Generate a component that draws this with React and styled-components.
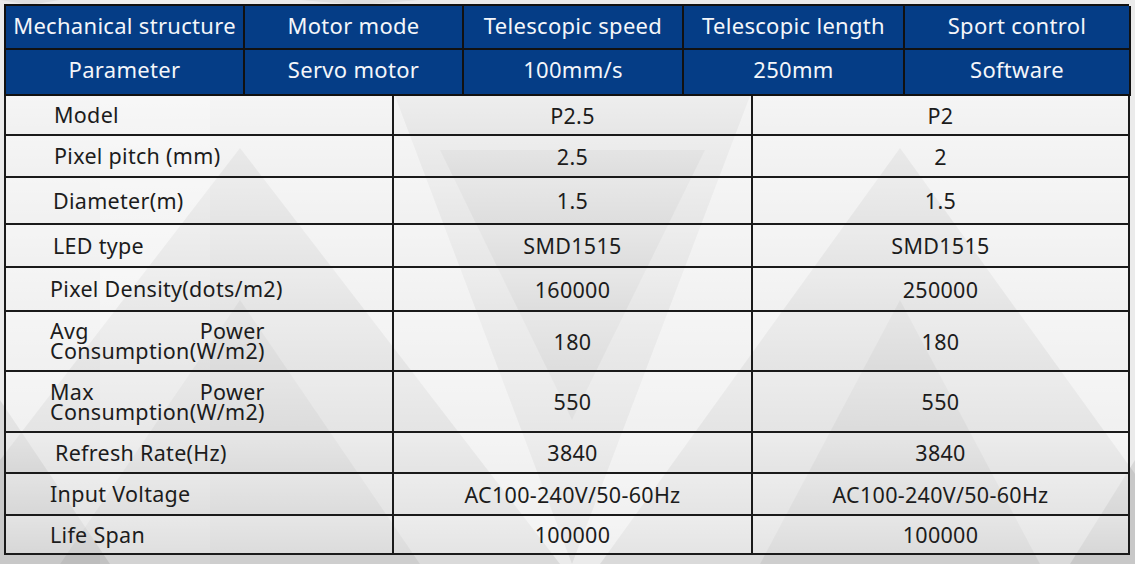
import React from 'react';
import styled, { createGlobalStyle } from 'styled-components';

const GlobalStyle = createGlobalStyle`
  html, body {
    margin: 0;
    padding: 0;
  }
  body {
    font-family: "Noto Sans", "Open Sans", Arial, sans-serif;
    background: #e7e7e7;
  }
`;

// soft grey triangles sitting behind the table, like the printed sheet
const triangles = `
<svg xmlns="http://www.w3.org/2000/svg" width="1135" height="564" viewBox="0 0 1135 564">
  <rect width="1135" height="564" fill="#ebebeb"/>
  <rect x="100" y="0" width="110" height="564" fill="#ffffff" opacity="0.25"/>
  <polygon points="240,148 -80,564 560,564" fill="#000" opacity="0.07"/>
  <polygon points="240,300 60,564 420,564" fill="#000" opacity="0.05"/>
  <polygon points="0,400 110,564 0,564" fill="#000" opacity="0.08"/>
  <polygon points="395,96 750,96 572,564" fill="#000" opacity="0.06"/>
  <polygon points="440,150 705,150 572,420" fill="#000" opacity="0.05"/>
  <polygon points="900,148 600,564 1200,564" fill="#000" opacity="0.07"/>
  <polygon points="900,300 760,564 1040,564" fill="#000" opacity="0.05"/>
  <polygon points="1135,460 1070,564 1135,564" fill="#000" opacity="0.08"/>
  <polygon points="0,0 60,0 30,5" fill="#000" opacity="0.05"/>
  <polygon points="300,0 420,0 360,5" fill="#000" opacity="0.05"/>
</svg>`;

const Page = styled.div`
  width: 1135px;
  height: 564px;
  box-sizing: border-box;
  padding: 4px 6px 0 4px;
  background: url("data:image/svg+xml,${encodeURIComponent(triangles)}") no-repeat;
  background-size: 1135px 564px;
`;

const HeadGrid = styled.div`
  display: grid;
  grid-template-columns: 239px 219px 220px 221px 226px;
  grid-template-rows: 44px 46px;
  border-top: 2px solid #111;
  border-left: 2px solid #111;
  box-sizing: border-box;
`;

const HeadCell = styled.div`
  background: #053d86;
  color: #f4f6fa;
  font-size: 22px;
  letter-spacing: 0.3px;
  display: flex;
  align-items: center;
  justify-content: center;
  padding-bottom: ${(p) => (p.$row === 0 ? 4 : 7)}px;
  border-right: 2px solid #111;
  border-bottom: 2px solid #111;
  white-space: nowrap;
`;

const SpecGrid = styled.div`
  display: grid;
  grid-template-columns: 388px 359px 377px;
  border-left: 2px solid #1a1a1a;
  box-sizing: border-box;
`;

const SpecCell = styled.div`
  height: ${(p) => p.$h}px;
  box-sizing: border-box;
  border-right: 2px solid #1a1a1a;
  border-bottom: 2px solid #1a1a1a;
  background: linear-gradient(rgba(255, 255, 255, 0.5), rgba(255, 255, 255, 0.28));
  color: #1c1c1c;
  font-size: 21.5px;
  letter-spacing: 0.3px;
  display: flex;
  align-items: center;
  justify-content: ${(p) => (p.$label ? 'flex-start' : 'center')};
  padding-left: ${(p) => (p.$label ? `${p.$indent}px` : '0')};
`;

const Label = styled.span`
  white-space: ${(p) => (p.$wrap ? 'normal' : 'nowrap')};
  width: ${(p) => (p.$wrap ? 'min-content' : 'auto')};
  text-align: justify;
  text-align-last: left;
  line-height: 20px;
`;

const header = [
  ['Mechanical structure', 'Motor mode', 'Telescopic speed', 'Telescopic length', 'Sport control'],
  ['Parameter', 'Servo motor', '100mm/s', '250mm', 'Software'],
];

const specs = [
  { label: 'Model', a: 'P2.5', b: 'P2', h: 40, indent: 48 },
  { label: 'Pixel pitch (mm)', a: '2.5', b: '2', h: 42, indent: 48 },
  { label: 'Diameter(m)', a: '1.5', b: '1.5', h: 47, indent: 47 },
  { label: 'LED type', a: 'SMD1515', b: 'SMD1515', h: 43, indent: 47 },
  { label: 'Pixel Density(dots/m2)', a: '160000', b: '250000', h: 44, indent: 44 },
  { label: 'Avg Power Consumption(W/m2)', a: '180', b: '180', h: 60, indent: 44, wrap: true },
  { label: 'Max Power Consumption(W/m2)', a: '550', b: '550', h: 61, indent: 44, wrap: true },
  { label: 'Refresh Rate(Hz)', a: '3840', b: '3840', h: 41, indent: 49 },
  { label: 'Input Voltage', a: 'AC100-240V/50-60Hz', b: 'AC100-240V/50-60Hz', h: 42, indent: 44 },
  { label: 'Life Span', a: '100000', b: '100000', h: 39, indent: 44 },
];

const App = () => {
  return (
    <>
      <GlobalStyle />
      <Page>
        <HeadGrid>
          {header.map((row, r) =>
            row.map((text, c) => (
              <HeadCell key={`${r}-${c}`} $row={r}>
                {text}
              </HeadCell>
            ))
          )}
        </HeadGrid>
        <SpecGrid>
          {specs.map((row) => (
            <React.Fragment key={row.label}>
              <SpecCell $label $indent={row.indent} $h={row.h}>
                <Label $wrap={row.wrap}>{row.label}</Label>
              </SpecCell>
              <SpecCell $h={row.h}>{row.a}</SpecCell>
              <SpecCell $h={row.h}>{row.b}</SpecCell>
            </React.Fragment>
          ))}
        </SpecGrid>
      </Page>
    </>
  );
};

export default App;
